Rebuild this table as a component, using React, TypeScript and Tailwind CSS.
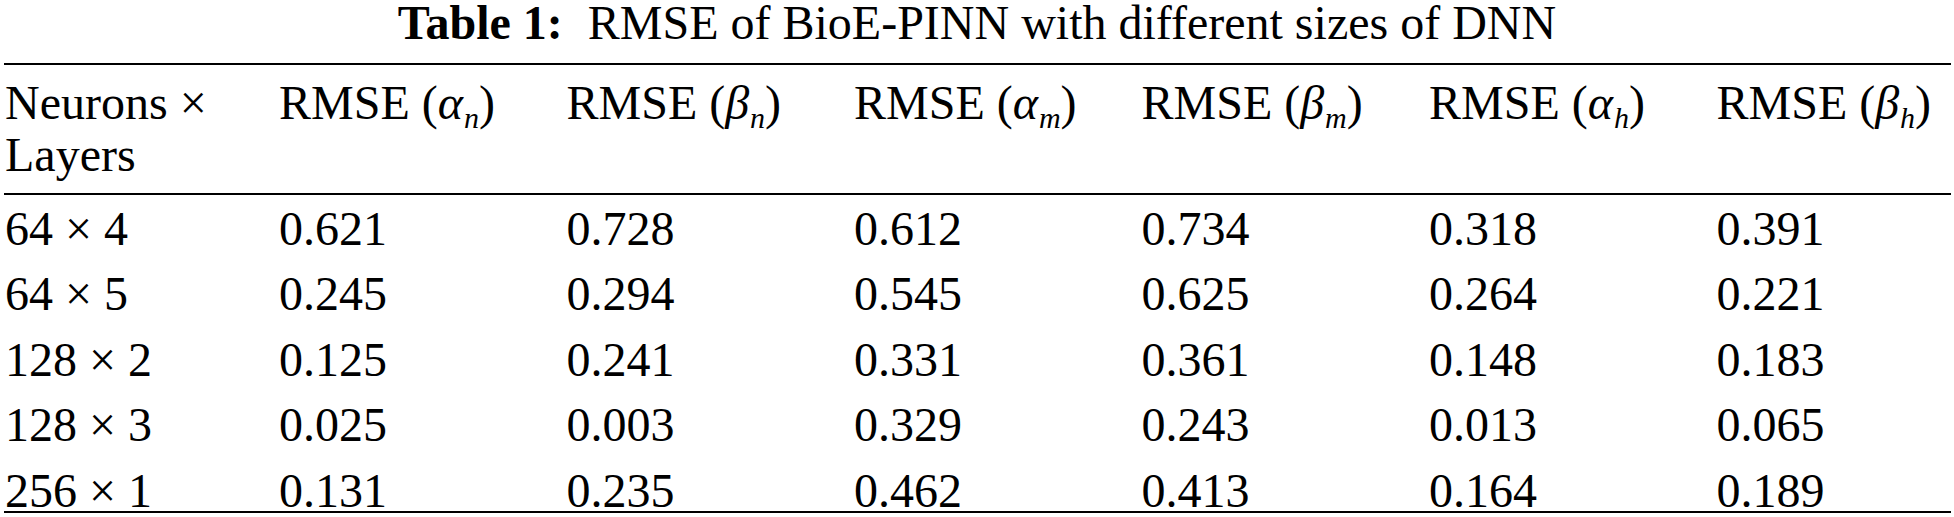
const headers: { sym: string; sub: string }[] = [
  { sym: "α", sub: "n" },
  { sym: "β", sub: "n" },
  { sym: "α", sub: "m" },
  { sym: "β", sub: "m" },
  { sym: "α", sub: "h" },
  { sym: "β", sub: "h" },
];

const rows: string[][] = [
  ["64 × 4", "0.621", "0.728", "0.612", "0.734", "0.318", "0.391"],
  ["64 × 5", "0.245", "0.294", "0.545", "0.625", "0.264", "0.221"],
  ["128 × 2", "0.125", "0.241", "0.331", "0.361", "0.148", "0.183"],
  ["128 × 3", "0.025", "0.003", "0.329", "0.243", "0.013", "0.065"],
  ["256 × 1", "0.131", "0.235", "0.462", "0.413", "0.164", "0.189"],
];

const grid = "grid grid-cols-[275px_repeat(5,287.5px)_1fr]";

const App = () => {
  return (
    <div className="w-[1954px] h-[517px] bg-white text-black font-['Liberation_Serif','Times_New_Roman',serif] text-[48px] overflow-hidden">
      {/* Caption */}
      <div className="h-[63px] flex justify-center leading-[46px]">
        <span className="font-bold">Table 1:</span>
        <span className="ml-[25px]">RMSE of BioE-PINN with different sizes of DNN</span>
      </div>

      <div className="ml-[4px] mr-[3px] border-t-2 border-b-2 border-black">
        {/* Header */}
        <div className={`${grid} pt-[12px] pb-[12px] border-b-2 border-black leading-[52px]`}>
          <div className="pl-[1px]">
            Neurons ×
            <br />
            Layers
          </div>
          {headers.map((h, i) => (
            <div key={i} className="whitespace-nowrap">
              RMSE (<i>{h.sym}</i>
              <i className="text-[30px] relative top-[9px] ml-[1px]">{h.sub}</i>)
            </div>
          ))}
        </div>

        {/* Body */}
        <div className="pt-[14px] flex flex-col gap-[25.4px]">
          {rows.map((r, i) => (
            <div key={i} className={`${grid} leading-[40px]`}>
              {r.map((c, j) => (
                <div key={j} className={j === 0 ? "pl-[1px]" : ""}>
                  {c}
                </div>
              ))}
            </div>
          ))}
        </div>
      </div>
    </div>
  );
};

export default App;
